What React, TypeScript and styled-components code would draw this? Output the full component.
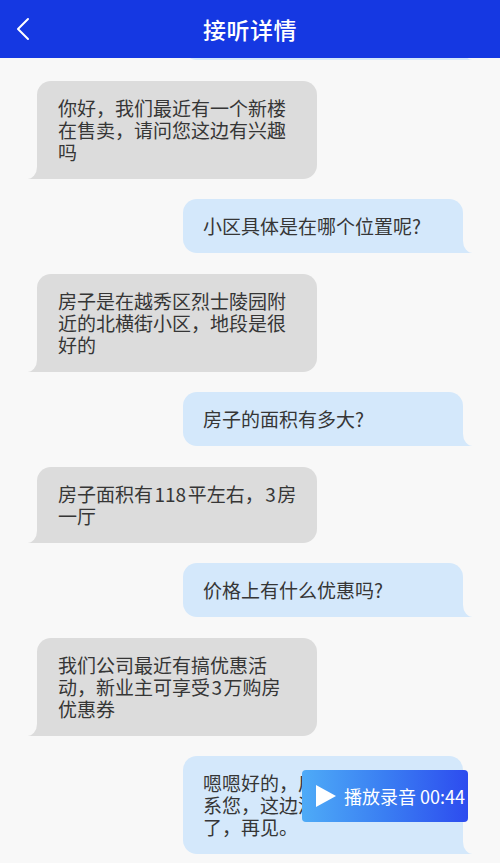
import styled, { createGlobalStyle } from "styled-components";

const GlobalStyle = createGlobalStyle`
  html, body {
    margin: 0;
    padding: 0;
    background: #f8f8f8;
  }
  body {
    font-family: "Noto Sans CJK SC", "Noto Sans", sans-serif;
  }
`;

const Screen = styled.div`
  position: relative;
  height: 863px;
  overflow: hidden;
  background: #f8f8f8;
`;

const Header = styled.header`
  position: relative;
  z-index: 2;
  height: 58px;
  background: #1538e2;
  display: grid;
  grid-template-columns: 60px 1fr 60px;
  align-items: center;
`;

const BackButton = styled.button`
  width: 48px;
  height: 58px;
  padding: 0 0 0 16px;
  border: 0;
  background: none;
  display: flex;
  align-items: center;
`;

const Title = styled.h1`
  margin: 0;
  text-align: center;
  color: #fff;
  font-size: 23px;
  font-weight: 500;
  letter-spacing: 0.5px;
`;

const Thread = styled.div`
  display: flex;
  flex-direction: column;
  gap: 20.5px;
  margin-top: -52px;
`;

type Side = "left" | "right";

const Bubble = styled.div<{ $side: Side }>`
  position: relative;
  box-sizing: border-box;
  width: 280px;
  margin: 0 37px;
  padding: ${(p) => (p.$side === "left" ? "16px 20px 16px 21px" : "16px 20px")};
  align-self: ${(p) => (p.$side === "left" ? "flex-start" : "flex-end")};
  border-radius: 14px;
  background: ${(p) => (p.$side === "left" ? "#dcdcdc" : "#d4e8fb")};
  color: #363636;
  font-size: 19px;
  line-height: 22px;

  &::before {
    content: "";
    position: absolute;
    bottom: 0;
    ${(p) => p.$side}: -9px;
    width: 24px;
    height: 16px;
    background: inherit;
  }

  &::after {
    content: "";
    position: absolute;
    bottom: 0;
    ${(p) => p.$side}: -20px;
    width: 20px;
    height: 16px;
    background: #f8f8f8;
    border-bottom-${(p) => (p.$side === "left" ? "right" : "left")}-radius: 10px 12px;
  }
`;

const Num = styled.span`
  margin: 0 1.5px;
`;

const PlayButton = styled.button`
  position: absolute;
  right: 32px;
  bottom: 41px;
  z-index: 3;
  width: 166px;
  height: 52px;
  padding: 0 0 0 13px;
  border: 0;
  border-radius: 4px;
  background: linear-gradient(90deg, #4eabf7 0%, #3a7ef2 50%, #2d4cef 100%);
  display: flex;
  align-items: center;
  gap: 8px;
  color: #fff;
  font-family: "Noto Sans CJK SC", "Noto Sans", sans-serif;
  font-size: 18px;
  white-space: nowrap;
`;

const messages: { side: Side; text: string }[] = [
  { side: "right", text: "好的，谢谢。" },
  { side: "left", text: "你好，我们最近有一个新楼在售卖，请问您这边有兴趣吗" },
  { side: "right", text: "小区具体是在哪个位置呢?" },
  { side: "left", text: "房子是在越秀区烈士陵园附近的北横街小区，地段是很好的" },
  { side: "right", text: "房子的面积有多大?" },
  { side: "left", text: "房子面积有118平左右，3房一厅" },
  { side: "right", text: "价格上有什么优惠吗?" },
  { side: "left", text: "我们公司最近有搞优惠活动，新业主可享受3万购房优惠券" },
  { side: "right", text: "嗯嗯好的，后续有需要再联系您，这边没什么事就先挂了，再见。" },
];

// digits get a little air around them, like the iOS text renderer does
function withNumbers(text: string) {
  return text.split(/(\d+)/).map((part, i) =>
    /^\d+$/.test(part) ? <Num key={i}>{part}</Num> : part
  );
}

function App() {
  return (
    <Screen>
      <GlobalStyle />
      <Header>
        <BackButton aria-label="返回">
          <svg width="14" height="24" viewBox="0 0 14 24">
            <polyline
              points="12,2 2,12 12,22"
              fill="none"
              stroke="#fff"
              strokeWidth="2"
              strokeLinecap="round"
              strokeLinejoin="round"
            />
          </svg>
        </BackButton>
        <Title>接听详情</Title>
        <span />
      </Header>
      <Thread>
        {messages.map((m, i) => (
          <Bubble key={i} $side={m.side}>
            {withNumbers(m.text)}
          </Bubble>
        ))}
      </Thread>
      <PlayButton>
        <svg width="21" height="22" viewBox="0 0 21 22">
          <polygon points="1,0 21,11 1,22" fill="#fff" />
        </svg>
        播放录音 00:44
      </PlayButton>
    </Screen>
  );
}

export default App;
